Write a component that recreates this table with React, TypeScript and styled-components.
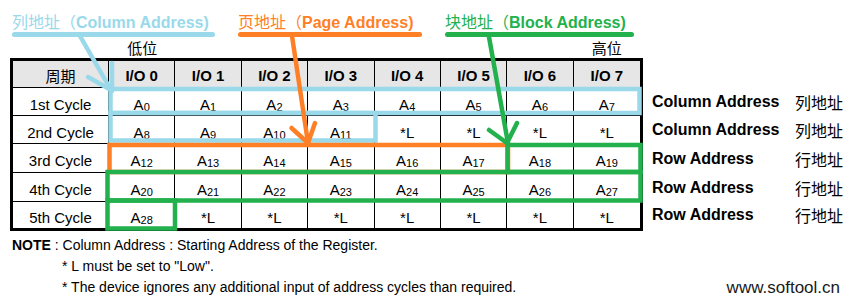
import React from "react";
import styled, { createGlobalStyle } from "styled-components";

const BLUE = "#99d9ea";
const ORANGE = "#ff7f27";
const GREEN = "#22b14c";
const FONT = `"Liberation Sans", Arial, "Noto Sans CJK SC", sans-serif`;
const CJK = `"Noto Sans CJK SC", "Liberation Sans", sans-serif`;

const Global = createGlobalStyle`
  html, body { margin: 0; padding: 0; background: #fff; }
  body { font-family: ${FONT}; color: #000; }
`;

const Page = styled.div`
  position: relative;
  width: 854px;
  height: 302px;
  box-sizing: border-box;
  padding: 0 14px 0 10px;
  overflow: hidden;
  background: #fff;
`;

const Callouts = styled.div`
  display: flex;
  gap: 23px;
  padding: 11px 0 0 2px;
  height: 37px;
  box-sizing: border-box;
`;

const Callout = styled.div<{ $color: string; $w: number }>`
  width: ${(p) => p.$w}px;
  color: ${(p) => p.$color};
  &::after {
    content: "";
    display: block;
    margin-top: 1px;
    height: 5px;
    border-radius: 3px;
    background: ${(p) => p.$color};
  }
`;

const CalloutText = styled.div`
  height: 20px;
  line-height: 20px;
  font-size: 16px;
  font-weight: 700;
  white-space: nowrap;
  overflow: visible;
`;

const CalloutCn = styled.span`
  font-family: ${CJK};
  font-weight: 400;
  line-height: 20px;
`;

const COLS = "96px repeat(8, 1fr)";

const BitRow = styled.div`
  display: grid;
  grid-template-columns: ${COLS};
  width: 633px;
  box-sizing: border-box;
  padding: 0 3px;
  height: 21px;
  line-height: 21px;
  font-family: ${CJK};
  font-size: 15px;
`;

const BitLabel = styled.div<{ $col: number }>`
  grid-column: ${(p) => p.$col};
  text-align: center;
  height: 21px;
`;

const Main = styled.div`
  display: flex;
  align-items: flex-start;
  gap: 9px;
`;

const Table = styled.div`
  display: grid;
  flex-shrink: 0;
  grid-template-columns: ${COLS};
  grid-template-rows: 27px 28px 28px 29px 29px 26px;
  width: 633px;
  box-sizing: border-box;
  border: 3px solid #000;
`;

const Cell = styled.div<{ $head?: boolean; $last?: boolean; $bottom?: boolean }>`
  display: flex;
  align-items: center;
  justify-content: center;
  box-sizing: border-box;
  padding-top: ${(p) => (p.$head ? 3 : 5)}px;
  border-right: ${(p) => (p.$last ? "none" : "1px solid #000")};
  border-bottom: ${(p) => (p.$bottom ? "none" : "1px solid #000")};
  background: ${(p) => (p.$head ? "#e6e6e6" : "#fff")};
  font-size: 15px;
  font-weight: ${(p) => (p.$head ? 700 : 400)};
  white-space: nowrap;
`;

const HeadCn = styled.span`
  font-family: ${CJK};
  font-weight: 400;
`;

const Sub = styled.span`
  font-size: 11px;
  vertical-align: -1px;
`;

const Side = styled.div`
  display: grid;
  flex-shrink: 0;
  grid-template-rows: 30px 28px 28px 29px 29px 26px;
  white-space: nowrap;
`;

const SideRow = styled.div<{ $row: number }>`
  grid-row: ${(p) => p.$row};
  display: flex;
  align-items: center;
`;

const SideName = styled.span`
  width: 143px;
  flex-shrink: 0;
  font-size: 16px;
  font-weight: 700;
`;

const SideCn = styled.span`
  font-family: ${CJK};
  font-size: 16px;
`;

const Bottom = styled.div`
  display: flex;
  justify-content: space-between;
  align-items: flex-end;
  padding-top: 4px;
`;

const Notes = styled.div`
  font-size: 14px;
  line-height: 21px;
`;

const NoteLine = styled.div<{ $indent: number }>`
  padding-left: ${(p) => p.$indent}px;
  white-space: nowrap;
`;

const Site = styled.div`
  font-size: 17px;
  line-height: 21px;
  color: #1a1a1a;
`;

const Overlay = styled.svg`
  position: absolute;
  left: 0;
  top: 0;
  width: 854px;
  height: 302px;
  pointer-events: none;
`;

type Val = string | [string, string];

const rows: { label: string; cells: Val[] }[] = [
  { label: "1st Cycle", cells: [["A", "0"], ["A", "1"], ["A", "2"], ["A", "3"], ["A", "4"], ["A", "5"], ["A", "6"], ["A", "7"]] },
  { label: "2nd Cycle", cells: [["A", "8"], ["A", "9"], ["A", "10"], ["A", "11"], "*L", "*L", "*L", "*L"] },
  { label: "3rd Cycle", cells: [["A", "12"], ["A", "13"], ["A", "14"], ["A", "15"], ["A", "16"], ["A", "17"], ["A", "18"], ["A", "19"]] },
  { label: "4th Cycle", cells: [["A", "20"], ["A", "21"], ["A", "22"], ["A", "23"], ["A", "24"], ["A", "25"], ["A", "26"], ["A", "27"]] },
  { label: "5th Cycle", cells: [["A", "28"], "*L", "*L", "*L", "*L", "*L", "*L", "*L"] },
];

const side = [
  { name: "Column Address", cn: "列地址" },
  { name: "Column Address", cn: "列地址" },
  { name: "Row Address", cn: "行地址" },
  { name: "Row Address", cn: "行地址" },
  { name: "Row Address", cn: "行地址" },
];

const SW = 4.5;

export default function App() {
  return (
    <Page>
      <Global />
      <Callouts>
        <Callout $color={BLUE} $w={203}>
          <CalloutText>
            <CalloutCn>列地址（</CalloutCn>Column Address)
          </CalloutText>
        </Callout>
        <Callout $color={ORANGE} $w={184}>
          <CalloutText>
            <CalloutCn>页地址（</CalloutCn>Page Address)
          </CalloutText>
        </Callout>
        <Callout $color={GREEN} $w={189}>
          <CalloutText>
            <CalloutCn>块地址（</CalloutCn>Block Address)
          </CalloutText>
        </Callout>
      </Callouts>
      <BitRow>
        <BitLabel $col={2}>低位</BitLabel>
        <BitLabel $col={9}>高位</BitLabel>
      </BitRow>
      <Main>
        <Table>
          <Cell $head>
            <HeadCn>周期</HeadCn>
          </Cell>
          {Array.from({ length: 8 }, (_, i) => (
            <Cell key={i} $head $last={i === 7}>
              I/O {i}
            </Cell>
          ))}
          {rows.map((r, ri) => (
            <React.Fragment key={r.label}>
              <Cell $bottom={ri === rows.length - 1}>{r.label}</Cell>
              {r.cells.map((c, ci) => (
                <Cell key={ci} $last={ci === 7} $bottom={ri === rows.length - 1}>
                  {typeof c === "string" ? (
                    c
                  ) : (
                    <span>
                      {c[0]}
                      <Sub>{c[1]}</Sub>
                    </span>
                  )}
                </Cell>
              ))}
            </React.Fragment>
          ))}
        </Table>
        <Side>
          {side.map((s, i) => (
            <SideRow key={i} $row={i + 2}>
              <SideName>{s.name}</SideName>
              <SideCn>{s.cn}</SideCn>
            </SideRow>
          ))}
        </Side>
      </Main>
      <Bottom>
        <Notes>
          <NoteLine $indent={2}>
            <b>NOTE</b> : Column Address : Starting Address of the Register.
          </NoteLine>
          <NoteLine $indent={52}>* L must be set to "Low".</NoteLine>
          <NoteLine $indent={52}>* The device ignores any additional input of address cycles than required.</NoteLine>
        </Notes>
        <Site>www.softool.cn</Site>
      </Bottom>
      <Overlay viewBox="0 0 854 302" fill="none">
        <g stroke={BLUE} strokeWidth={SW}>
          <rect x={110.5} y={89} width={529} height={24} />
          <rect x={110.5} y={113} width={265} height={27.5} />
          <g strokeLinecap="round">
            <path d="M80 36 L111 90" />
            <path d="M88 77 L111 90" />
            <path d="M112 63 L112 91" />
          </g>
        </g>
        <g stroke={ORANGE} strokeWidth={SW}>
          <rect x={109.5} y={145} width={398.5} height={27} />
          <g strokeLinecap="round">
            <path d="M292 36 L308 143" />
            <path d="M291.5 128 L308 143" />
            <path d="M315 123 L308 143" />
          </g>
        </g>
        <g stroke={GREEN} strokeWidth={SW}>
          <rect x={507.5} y={145} width={133} height={27} />
          <rect x={107.5} y={172} width={533} height={28.5} />
          <rect x={107.5} y={200.5} width={67.5} height={28} />
          <g strokeLinecap="round">
            <path d="M489 37 L508 143" />
            <path d="M489 130 L507 143" />
            <path d="M517 123 L507 143" />
          </g>
        </g>
      </Overlay>
    </Page>
  );
}
